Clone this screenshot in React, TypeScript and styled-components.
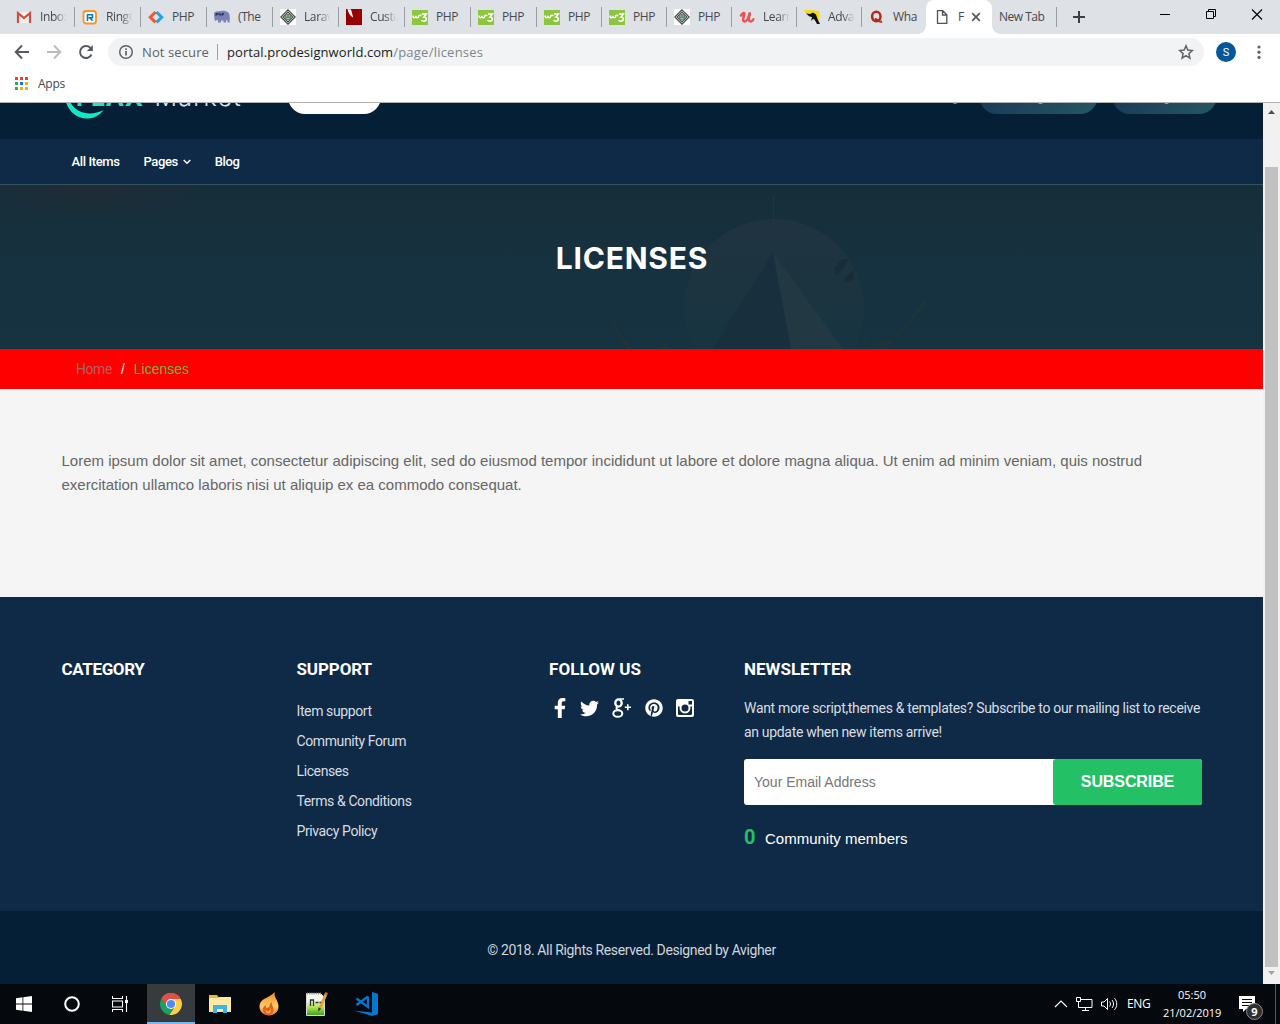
import React from 'react';
import styled, { createGlobalStyle } from 'styled-components';
import { FaFacebookF, FaTwitter, FaPinterest } from 'react-icons/fa';

const ui = '"Open Sans", "Noto Sans", sans-serif';
const body = '"Liberation Sans", Arial, sans-serif';
const site = 'Roboto, sans-serif';

const GlobalStyle = createGlobalStyle`
  * { box-sizing: border-box; }
  body { margin: 0; overflow: hidden; }
  svg { display: block; flex: none; }
  h1, h2, p, ul { margin: 0; padding: 0; }
  ul { list-style: none; }
  a { color: inherit; text-decoration: none; }
`;

const Desktop = styled.div`
  display: flex;
  flex-direction: column;
  width: 1280px;
  height: 1024px;
  overflow: hidden;
  font-family: ${body};
`;

/* ---------- browser window ---------- */

const TabStrip = styled.div`
  display: flex;
  flex: none;
  height: 34px;
  padding-left: 8px;
  background: #dee1e6;
`;

const TabBox = styled.div<{ $width: number; $divider: boolean }>`
  position: relative;
  display: flex;
  align-items: center;
  gap: 8px;
  width: ${(p) => p.$width}px;
  padding-left: 8px;
  &::after {
    content: '';
    display: ${(p) => (p.$divider ? 'block' : 'none')};
    position: absolute;
    right: -1px;
    top: 7px;
    width: 1px;
    height: 20px;
    background: #9a9da1;
  }
`;

const TabLabel = styled.span<{ $fade?: boolean }>`
  width: 27px;
  overflow: hidden;
  white-space: nowrap;
  font: 12px/16px ${ui};
  letter-spacing: -0.4px;
  color: #45494d;
  mask-image: ${(p) => (p.$fade ? 'linear-gradient(90deg, #000 55%, transparent 98%)' : 'none')};
`;

const ActiveTab = styled.div`
  position: relative;
  display: flex;
  align-items: center;
  width: 66px;
  padding-left: 8px;
  background: #fff;
  border-radius: 8px 8px 0 0;
  &::before, &::after {
    content: '';
    position: absolute;
    bottom: 0;
    width: 8px;
    height: 8px;
  }
  &::before { left: -8px; background: radial-gradient(circle at 0 0, #dee1e6 7.5px, #fff 8px); }
  &::after { right: -8px; background: radial-gradient(circle at 100% 0, #dee1e6 7.5px, #fff 8px); }
`;

const ActiveLabel = styled.span`
  width: 7px;
  margin: 0 6px 0 8px;
  font: 12px/16px ${ui};
  color: #45494d;
`;

const NewTab = styled.div`
  width: 65px;
  height: 20px;
  margin-top: 7px;
  padding-left: 7px;
  border-right: 1px solid #9a9da1;
  font: 12px/20px ${ui};
  letter-spacing: -0.5px;
  color: #45494d;
  white-space: nowrap;
`;

const PlusButton = styled.div`
  margin: 11px 0 0 16px;
`;

const WindowButtons = styled.div`
  display: flex;
  gap: 34px;
  margin: 9px 17px 0 auto;
`;

const Toolbar = styled.div`
  display: flex;
  flex: none;
  align-items: center;
  height: 36px;
  padding-left: 14px;
  background: #fff;
`;

const NavButtons = styled.div`
  display: flex;
  gap: 16px;
  width: 94px;
`;

const AddressBar = styled.div`
  display: flex;
  align-items: center;
  width: 1096px;
  height: 28px;
  padding: 0 10px;
  border-radius: 14px;
  background: #f1f3f4;
  font: 13px/20px ${ui};
`;

const Insecure = styled.span`
  width: 76px;
  margin-left: 8px;
  letter-spacing: 0.11px;
  color: #5f6368;
  border-right: 1px solid #9aa0a6;
  line-height: 16px;
`;

const Url = styled.span`
  flex: 1;
  margin-left: 9px;
  letter-spacing: 0.07px;
  color: #202124;
`;

const UrlPath = styled.span`
  letter-spacing: 0.23px;
  color: #80868b;
`;

const Avatar = styled.div`
  width: 20px;
  height: 20px;
  margin: 0 21px 0 12px;
  border-radius: 50%;
  background: #01579b;
  color: #fff;
  font: 11px/21px Roboto, sans-serif;
  text-align: center;
`;

const Bookmarks = styled.div`
  display: flex;
  flex: none;
  align-items: center;
  gap: 10px;
  height: 33px;
  padding: 0 0 4px 15px;
  background: #fff;
  border-bottom: 1px solid #b3b2b2;
  font: 12px/20px ${ui};
  letter-spacing: -0.25px;
  color: #45494d;
`;

const AppsGrid = styled.div`
  display: grid;
  grid-template-columns: repeat(3, 3px);
  gap: 2px;
  margin-bottom: 2px;
`;

const Dot = styled.i<{ $color: string }>`
  height: 3px;
  background: ${(p) => p.$color};
`;

const Viewport = styled.div`
  display: flex;
  flex: 1;
  min-height: 0;
`;

const Page = styled.main`
  display: flex;
  flex-direction: column;
  width: 1263px;
`;

const Scrollbar = styled.div`
  display: flex;
  flex-direction: column;
  align-items: center;
  width: 17px;
  padding: 7px 0 6px;
  background: #f1f1f1;
`;

const Thumb = styled.div`
  width: 13px;
  height: 800px;
  margin: 53px 0 4px;
  background: #c1c1c1;
`;

/* ---------- site ---------- */

const Header = styled.header`
  flex: none;
  height: 36px;
  overflow: hidden;
  background: #051f37;
`;

const HeaderInner = styled.div`
  display: flex;
  height: 40px;
  margin-top: -29px;
  padding-left: 64px;
`;

const Logo = styled.div`
  position: relative;
  width: 224px;
  white-space: nowrap;
`;

const LogoText = styled.div`
  display: flex;
  gap: 11px;
  padding: 8px 0 0 12px;
  font: 700 25px/30px Inter, sans-serif;
  letter-spacing: 0.4px;
  color: #13e8c8;
`;

const LogoLight = styled.span`
  font-weight: 300;
  letter-spacing: 1.2px;
  color: #dfe6ee;
`;

const LogoSwoosh = styled.svg`
  position: absolute;
  left: 0;
  top: 16px;
`;

const SearchPill = styled.div`
  width: 93px;
  border-radius: 17px;
  background: #fff;
`;

const CartDot = styled.div`
  align-self: flex-end;
  width: 6px;
  height: 3px;
  margin: 0 21px 10px auto;
  border-radius: 0 0 3px 3px;
  background: #26bf66;
`;

const AccountButton = styled.div<{ $width: number }>`
  display: flex;
  align-items: flex-end;
  justify-content: center;
  width: ${(p) => p.$width}px;
  margin-right: 14px;
  border-radius: 18px;
  background: linear-gradient(135deg, #1b3a5b 20%, #22555f 90%);
  &:last-child { margin-right: 46px; }
`;

const Descender = styled.i`
  width: 5px;
  height: 2px;
  margin: 0 0 10px 4px;
  border-radius: 0 0 2px 2px;
  background: #8fa5b2;
`;

const Nav = styled.nav`
  display: flex;
  flex: none;
  align-items: center;
  gap: 24px;
  height: 45px;
  padding-left: 71.5px;
  background: #0f2a47;
  font: 500 13px/20px ${site};
  letter-spacing: -0.39px;
  color: #fff;
`;

const NavItem = styled.a`
  display: flex;
  align-items: center;
  gap: 5px;
`;

const Hero = styled.section`
  position: relative;
  display: flex;
  flex: none;
  justify-content: center;
  height: 165px;
  padding: 55px 0 0 1px;
  border-top: 1px solid #35535f;
  background: #162f3d;
`;

const HeroArt = styled.svg`
  position: absolute;
  inset: 0;
`;

const Title = styled.h1`
  position: relative;
  font: 700 30px/36px Inter, sans-serif;
  letter-spacing: 0.8px;
  color: #fff;
`;

const Breadcrumb = styled.div`
  display: flex;
  flex: none;
  height: 40px;
  padding-left: 76px;
  background: #f00;
  font: 14px/40px ${body};
`;

const HomeLink = styled.a`
  font-family: ${site};
  letter-spacing: -0.45px;
  color: #b0605f;
`;

const Slash = styled.span`
  margin: 0 9px;
  color: #eee;
`;

const Current = styled.span`
  color: #5dbb46;
`;

const Content = styled.section`
  flex: none;
  height: 208px;
  padding: 60px 61px 0 61.5px;
  background: #f5f5f5;
  font: 15px/24px ${body};
  color: #666;
`;

const Footer = styled.footer`
  display: grid;
  flex: none;
  grid-template-columns: 235px 252.5px 195px 458px;
  height: 314px;
  padding: 60px 0 0 61.5px;
  background: #0f2a47;
  color: #d9dde2;
  font: 14px/24px ${site};
`;

const Heading = styled.h2<{ $tracking?: number }>`
  margin-bottom: 15px;
  font: 700 17px/24px ${site};
  letter-spacing: ${(p) => p.$tracking ?? 0}px;
  color: #fff;
`;

const LinkItem = styled.li`
  line-height: 30px;
  letter-spacing: -0.39px;
`;

const Socials = styled.div`
  display: flex;
  align-items: center;
  height: 24px;
  padding-left: 1px;
  gap: 13.5px;
  color: #fff;
  & > :first-child { margin-right: -4px; }
`;

const Pitch = styled.p`
  margin-bottom: 15px;
  letter-spacing: -0.32px;
`;

const Form = styled.div`
  display: flex;
  height: 46px;
  border-radius: 3px;
  background: #fff;
`;

const Email = styled.input`
  flex: 1;
  min-width: 0;
  padding: 0 10px;
  border: 0;
  background: transparent;
  font: 14px ${body};
  &::placeholder { color: #777; }
`;

const Subscribe = styled.button`
  width: 149px;
  padding: 0;
  border: 0;
  border-radius: 3px;
  background: #23c065;
  color: #fff;
  font: 700 16px ${body};
  letter-spacing: -0.1px;
`;

const Members = styled.div`
  display: flex;
  align-items: center;
  gap: 10px;
  margin-top: 20px;
  color: #fff;
  font: 15px/28px ${body};
`;

const Count = styled.b`
  margin-bottom: 4px;
  font: 700 20px/24px ${site};
  letter-spacing: -0.5px;
  color: #23c065;
`;

const Copyright = styled.div`
  flex: none;
  height: 73px;
  padding-top: 3px;
  background: #051f37;
  color: #d0d5da;
  font: 14px/73px ${site};
  letter-spacing: -0.37px;
  text-align: center;
`;

/* ---------- taskbar ---------- */

const Taskbar = styled.div`
  display: flex;
  flex: none;
  height: 40px;
  background: #05080c;
  color: #fff;
`;

const TaskButton = styled.div<{ $active?: boolean; $gap?: number }>`
  display: flex;
  align-items: center;
  justify-content: center;
  width: 48px;
  margin-left: ${(p) => p.$gap ?? 0}px;
  background: ${(p) => (p.$active ? '#383b3e' : 'transparent')};
  border-bottom: ${(p) => (p.$active ? '2px solid #76b9ed' : 'none')};
  padding-top: ${(p) => (p.$active ? '2px' : '0')};
`;

const Tray = styled.div`
  display: flex;
  align-items: center;
  margin-left: auto;
  font: 11px/18px ${ui};
`;

const TrayIcons = styled.div`
  display: flex;
  align-items: center;
  gap: 8px;
  margin-right: 9px;
`;

const Language = styled.span`
  width: 36px;
  font-size: 12px;
  letter-spacing: -0.4px;
`;

const Clock = styled.div`
  width: 58px;
  margin-right: 18px;
  text-align: center;
`;

const Notices = styled.div`
  position: relative;
  width: 37px;
  height: 40px;
  padding-top: 12px;
  border-right: 1px solid #55585b;
`;

const NoticeCount = styled.span`
  position: absolute;
  left: 7px;
  top: 19px;
  width: 17px;
  height: 17px;
  border: 1px solid #8b8b8b;
  border-radius: 50%;
  background: #2e2f31;
  font: 700 11px/15px ${ui};
  text-align: center;
`;

const TaskEnd = styled.div`
  width: 4px;
`;

/* ---------- favicons ---------- */

const W3 = () => (
  <svg width="16" height="16" viewBox="0 0 16 16">
    <path fill="#8cc63f" d="M0 1h16v15H0z" />
    <path d="M1 6.500c0 3 2.800 3 2.800.3 0 2.700 3 2.700 3-.3.500-.5 1.200-.3 2.700 0" fill="none" stroke="#fff" strokeWidth="1.500" />
    <path d="M10 5h4.300L12 8c3.300-.2 3 4.300-.2 4.300-1 0-1.800-.5-2.200-1.300" fill="none" stroke="#fff" strokeWidth="1.600" />
  </svg>
);

const Diamond = () => (
  <svg width="16" height="16" viewBox="0 0 16 16">
    <path fill="#fff" d="M0 0h16v16H0z" />
    <path d="M8 .8 15.200 8 8 15.200.8 8zM8 3.200 12.800 8 8 12.800 3.200 8z" fill="none" stroke="#4b4f4d" strokeWidth="1.200" />
    <circle cx="8" cy="8" r="3" fill="#4c8068" />
    <path d="M6 7h1.500M8.500 7H10M6.500 9.300h3" stroke="#dcebe3" strokeWidth=".8" />
  </svg>
);

const Gmail = () => (
  <svg width="16" height="16" viewBox="0 0 16 16">
    <path fill="#f3f0f0" d="M2 3h12v11H2z" />
    <path d="M2 14V4l6 5 6-5v10" fill="none" stroke="#d54b3d" strokeWidth="2.200" />
  </svg>
);

const Ring = () => (
  <svg width="16" height="16" viewBox="0 0 16 16">
    <rect x="1.500" y="2" width="12.500" height="12.500" rx="2.500" fill="#fff" stroke="#f7941e" strokeWidth="1.800" />
    <path d="M5.500 12V5.800h5v3h-4M8 9l2.500 2.800" fill="none" stroke="#0a78be" strokeWidth="1.600" />
  </svg>
);

const Chevrons = () => (
  <svg width="16" height="16" viewBox="0 0 16 16" fill="none" strokeWidth="3">
    <path d="M7.500 3 2.300 8.200l5.200 5.200" stroke="#f05a28" />
    <path d="m8.500 3 5.200 5.200-5.200 5.200" stroke="#27a1dd" />
  </svg>
);

const Elephant = () => (
  <svg width="16" height="16" viewBox="0 0 16 16">
    <path fill="#7c81b4" d="M0 5c0-2 2-3 5-2.500C8 1 15 1.500 15.500 6c.5 3 .2 5 0 7.500h-2V11l-1.500.5v2H9.500v-2H7v2H4V11H2.500c0 1.500-2 1-2-.5z" />
    <path d="M2 7V4.500h1.500v1H2M5 3.500v3M5 5h1.500v1.500M8 7V4.500h1.500v1H8" fill="none" stroke="#2c3060" strokeWidth="1" />
  </svg>
);

const RedMark = () => (
  <svg width="16" height="16" viewBox="0 0 16 16">
    <path fill="#980000" d="M0 0h16v16H0z" />
    <path fill="#fff" d="m1.500 0 3.500.5 2.300 8.300C4.500 7 2 4 1.500 0z" />
  </svg>
);

const Udemy = () => (
  <svg width="16" height="16" viewBox="0 0 16 16" fill="none" stroke="#ec5252" strokeLinecap="round">
    <path d="M2 6.500C4 3.500 6 3 5.300 5.500 4.500 8 3 12.500 5.500 12.500c2.500 0 4-3.500 5-8" strokeWidth="2.500" />
    <path d="M11 4.500C10 8 9 12.500 11.500 12.500c1.500 0 2.500-1 3-2.300" strokeWidth="2.300" />
  </svg>
);

const Figure = () => (
  <svg width="16" height="16" viewBox="0 0 16 16">
    <path fill="#f5dc13" d="M0 1h6l9.500 1v9H11L2 4z" />
    <path fill="#121212" d="M2 4.500 6 5 9 3.500l3 2 1.500 4.500L16 15h-3l-2.500-4.500L9 10l-2 2 1-4-2.500-.5z" />
  </svg>
);

const Quora = () => (
  <svg width="16" height="16" viewBox="0 0 16 16">
    <ellipse cx="7.300" cy="7.500" rx="4.200" ry="4.700" fill="none" stroke="#b02c15" strokeWidth="2.500" />
    <path d="M6 10c3-.8 3 4.300 7 2.500" fill="none" stroke="#b02c15" strokeWidth="2" />
  </svg>
);

const tabs: { icon: React.ReactNode; label: string; width: number; fade?: boolean }[] = [
  { icon: <Gmail />, label: 'Inbox', width: 66, fade: true },
  { icon: <Ring />, label: 'RingC', width: 66, fade: true },
  { icon: <Chevrons />, label: 'PHP', width: 66 },
  { icon: <Elephant />, label: '(The', width: 66 },
  { icon: <Diamond />, label: 'Larav', width: 66, fade: true },
  { icon: <RedMark />, label: 'Custo', width: 66, fade: true },
  { icon: <W3 />, label: 'PHP', width: 66 },
  { icon: <W3 />, label: 'PHP', width: 66 },
  { icon: <W3 />, label: 'PHP', width: 65 },
  { icon: <W3 />, label: 'PHP', width: 65 },
  { icon: <Diamond />, label: 'PHP', width: 65 },
  { icon: <Udemy />, label: 'Learn', width: 65, fade: true },
  { icon: <Figure />, label: 'Adva', width: 65, fade: true },
  { icon: <Quora />, label: 'Wha', width: 65 },
];

const appColors = ['#ea4335', '#ea4335', '#ea4335', '#34a853', '#1a73e8', '#f4b400', '#34a853', '#f4b400', '#f4b400'];

const links = ['Item support', 'Community Forum', 'Licenses', 'Terms & Conditions', 'Privacy Policy'];

function Browser() {
  return (
    <>
      <TabStrip>
        {tabs.map((t, i) => (
          <TabBox key={i} $width={t.width} $divider={i < tabs.length - 1}>
            {t.icon}
            <TabLabel $fade={t.fade}>{t.label}</TabLabel>
          </TabBox>
        ))}
        <ActiveTab>
          <svg width="16" height="16" viewBox="0 0 16 16" fill="none" stroke="#4f5256" strokeWidth="1.300">
            <path d="M3.500 1.700h5.300l4 4v8.600H3.500zM8.500 2v4h4" />
          </svg>
          <ActiveLabel>F</ActiveLabel>
          <svg width="10" height="10" viewBox="0 0 10 10" stroke="#55595d" strokeWidth="1.700">
            <path d="m1.200 1.200 7.600 7.600m0-7.600L1.200 8.800" />
          </svg>
        </ActiveTab>
        <NewTab>New Tab</NewTab>
        <PlusButton>
          <svg width="12" height="12" viewBox="0 0 12 12" stroke="#3c4043" strokeWidth="2">
            <path d="M6 0v12M0 6h12" />
          </svg>
        </PlusButton>
        <WindowButtons>
          <svg width="12" height="12" viewBox="0 0 12 12" stroke="#000"><path d="M1 5.500h10" /></svg>
          <svg width="12" height="12" viewBox="0 0 12 12" fill="none" stroke="#000"><path d="M1.500 2.500h7v7h-7zM3.500 2.500v-2h7v7h-2" /></svg>
          <svg width="12" height="12" viewBox="0 0 12 12" stroke="#000" strokeWidth="1.100"><path d="m1 .5 10 10m0-10-10 10" /></svg>
        </WindowButtons>
      </TabStrip>
      <Toolbar>
        <NavButtons>
          <svg width="16" height="16" viewBox="0 0 16 16" fill="none" stroke="#54585c" strokeWidth="1.900"><path d="M15 8H2M8 1.500 1.700 8 8 14.500" /></svg>
          <svg width="16" height="16" viewBox="0 0 16 16" fill="none" stroke="#b9bbbd" strokeWidth="1.900"><path d="M1 8h13M8 1.500 14.300 8 8 14.500" /></svg>
          <svg width="16" height="16" viewBox="0 0 16 16" fill="none" stroke="#54585c" strokeWidth="1.900"><path d="M13.500 10.500A6 6 0 1 1 12.300 3.800L14 5.500" /><path d="M14.800 1v6H9z" fill="#54585c" stroke="none" /></svg>
        </NavButtons>
        <AddressBar>
          <svg width="16" height="16" viewBox="0 0 16 16" fill="none" stroke="#5f6368" strokeWidth="1.500"><circle cx="8" cy="8" r="6.300" /><path d="M8 7v4.500M8 4.300v1.500" strokeWidth="1.700" /></svg>
          <Insecure>Not secure</Insecure>
          <Url>portal.prodesignworld.com<UrlPath>/page/licenses</UrlPath></Url>
          <svg width="16" height="16" viewBox="0 0 16 16" fill="none" stroke="#5f6368" strokeWidth="1.500"><path d="m8 1.800 1.800 4.300 4.600.4-3.500 3.100 1 4.500L8 11.700l-3.900 2.400 1-4.500-3.500-3.100 4.600-.4z" /></svg>
        </AddressBar>
        <Avatar>S</Avatar>
        <svg width="4" height="16" viewBox="0 0 4 16" fill="#5f6368"><circle cx="2" cy="3" r="1.600" /><circle cx="2" cy="8.200" r="1.600" /><circle cx="2" cy="13.400" r="1.600" /></svg>
      </Toolbar>
      <Bookmarks>
        <AppsGrid>{appColors.map((c, i) => <Dot key={i} $color={c} />)}</AppsGrid>
        Apps
      </Bookmarks>
    </>
  );
}

function SiteHeader() {
  return (
    <>
      <Header>
        <HeaderInner>
          <Logo>
            <LogoText>FLAX<LogoLight>Market</LogoLight></LogoText>
            <LogoSwoosh width="42" height="32" viewBox="0 0 42 32">
              <path d="M1 0C-1 14 8 28.500 23 28.500 30 28.500 36 25 39.500 20 26 27 10 23 5.500 10z" fill="#13e8c8" />
            </LogoSwoosh>
          </Logo>
          <SearchPill />
          <CartDot />
          <AccountButton $width={119}><Descender /></AccountButton>
          <AccountButton $width={105}><Descender /></AccountButton>
        </HeaderInner>
      </Header>
      <Nav>
        <NavItem>All Items</NavItem>
        <NavItem>
          Pages
          <svg width="8" height="6" viewBox="0 0 8 6" fill="none" stroke="#fff" strokeWidth="1.500"><path d="m.7 1 3.300 3.300L7.300 1" /></svg>
        </NavItem>
        <NavItem>Blog</NavItem>
      </Nav>
      <Hero>
        <HeroArt width="1263" height="164" viewBox="0 0 1263 164">
          <defs>
            <linearGradient id="sky" x1="0" y1="0" x2="0" y2="1"><stop offset="0" stopColor="#162e39" /><stop offset=".5" stopColor="#163140" /><stop offset="1" stopColor="#163341" /></linearGradient>
            <radialGradient id="dusk"><stop offset="0" stopColor="#202c36" /><stop offset="1" stopColor="#202c36" stopOpacity="0" /></radialGradient>
            <linearGradient id="moon" x1="0" y1="0" x2="0" y2="1"><stop offset="0" stopColor="#203440" /><stop offset=".6" stopColor="#193441" /><stop offset="1" stopColor="#163341" /></linearGradient>
          </defs>
          <path fill="url(#sky)" d="M0 0h1263v164H0z" />
          <ellipse cx="90" cy="0" rx="120" ry="34" fill="url(#dusk)" />
          <circle cx="774" cy="124" r="90" fill="url(#moon)" />
          <path fill="#182f3e" d="m773 68-38 60-22 36h78z" />
          <path fill="#223943" d="m773 68 18 96h52z" />
          <path stroke="#1b3743" d="M773.500 10v58" />
          <path fill="#172d38" d="m834 84 8-10 6 0-4 9-8 7zm10 10 9-9 1 9-8 4z" />
          <path fill="#203438" d="m927 112-2 9-37 41-18-2 13-4 10-1zm-57 37-9 11 5 1zM610 129l8 16 10 13 6 6h-8l-9-16zm55 28-5 7h10z" />
        </HeroArt>
        <Title>LICENSES</Title>
      </Hero>
      <Breadcrumb>
        <HomeLink>Home</HomeLink>
        <Slash>/</Slash>
        <Current>Licenses</Current>
      </Breadcrumb>
    </>
  );
}

function SiteFooter() {
  return (
    <>
      <Footer>
        <Heading $tracking={-0.37}>CATEGORY</Heading>
        <div>
          <Heading $tracking={-0.1}>SUPPORT</Heading>
          <ul>{links.map((l) => <LinkItem key={l}><a>{l}</a></LinkItem>)}</ul>
        </div>
        <div>
          <Heading $tracking={0.07}>FOLLOW US</Heading>
          <Socials>
            <FaFacebookF size={20} />
            <FaTwitter size={19} />
            <svg width="19" height="20" viewBox="0 0 19 20" fill="none" stroke="#fff">
              <ellipse cx="6.500" cy="5" rx="3.200" ry="3.700" strokeWidth="2.300" />
              <path d="M7.500 1H12M5.500 8.500C3 10.500 5 11.500 8 12.500" strokeWidth="1.700" />
              <ellipse cx="5.800" cy="15.500" rx="4.500" ry="3.300" strokeWidth="2" />
              <path d="M15.800 6.200v6M12.800 9.200h6.200" strokeWidth="1.600" />
            </svg>
            <FaPinterest size={18} />
            <svg width="18" height="18" viewBox="0 0 18 18">
              <path fillRule="evenodd" fill="#fff" d="M2 0h14a2 2 0 0 1 2 2v14a2 2 0 0 1-2 2H2a2 2 0 0 1-2-2V2a2 2 0 0 1 2-2zm10.500 2v3.500H16V2zM2 7.500V15a1 1 0 0 0 1 1h12a1 1 0 0 0 1-1V7.500h-1.700a5.500 5.500 0 1 1-10.600 0z" />
              <circle cx="9" cy="9" r="3.500" fill="#0f2a47" />
            </svg>
          </Socials>
        </div>
        <div>
          <Heading>NEWSLETTER</Heading>
          <Pitch>
            Want more script,themes &amp; templates? Subscribe to our mailing list to receive
            <br />
            an update when new items arrive!
          </Pitch>
          <Form>
            <Email placeholder="Your Email Address" />
            <Subscribe>SUBSCRIBE</Subscribe>
          </Form>
          <Members><Count>0</Count>Community members</Members>
        </div>
      </Footer>
      <Copyright>© 2018. All Rights Reserved. Designed by Avigher</Copyright>
    </>
  );
}

function WindowsTaskbar() {
  return (
    <Taskbar>
      <TaskButton>
        <svg width="16" height="16" viewBox="0 0 16 16" fill="#fff"><path d="M0 2.200 6.500 1.300v6.200H0zM7.300 1.200 16 0v7.500H7.300zM0 8.400h6.500v6.300L0 13.800zM7.300 8.400H16V16l-8.700-1.200z" /></svg>
      </TaskButton>
      <TaskButton>
        <svg width="16" height="16" viewBox="0 0 16 16" fill="none" stroke="#fff" strokeWidth="2"><circle cx="8" cy="8" r="6.800" /></svg>
      </TaskButton>
      <TaskButton>
        <svg width="16" height="16" viewBox="0 0 16 16" fill="none" stroke="#fff" strokeWidth="1.100"><path d="M.5 0v2.500h10V0M.5 16v-2.500h10V16M.5 5h10v6H.5zM14.500 0v16" /><path d="M13 4h3v3h-3z" fill="#fff" stroke="none" /></svg>
      </TaskButton>
      <TaskButton $active $gap={3}>
        <svg width="22" height="22" viewBox="0 0 22 22">
          <path fill="#de5246" d="M1.500 5.500a11 11 0 0 1 19 0L11 11z" />
          <path fill="#de5246" d="M1.500 5.500 6 13.500l5-7.500h9.700A11 11 0 0 0 1.500 5.500z" />
          <path fill="#1aa260" d="M1.500 5.500A11 11 0 0 0 9.500 21.900L14.500 14 11 16 6.200 13.500z" />
          <path fill="#ffce44" d="M11 6h9.700A11 11 0 0 1 9.500 21.900l5-7.900z" />
          <circle cx="11" cy="11" r="5.100" fill="#fff" /><circle cx="11" cy="11" r="4.100" fill="#4c8bf5" />
        </svg>
      </TaskButton>
      <TaskButton $gap={1}>
        <svg width="22" height="20" viewBox="0 0 22 20">
          <path fill="#e7b83f" d="M0 1h8l1.500 2H22v15H0z" />
          <path fill="#ffe9a2" d="M0 4h9l1.500-1H22v15H0z" />
          <path fill="#3fb3e8" d="M4 11h14v8h-4v-4H8v4H4z" />
        </svg>
      </TaskButton>
      <TaskButton $gap={1}>
        <svg width="20" height="24" viewBox="0 0 20 24">
          <defs><linearGradient id="fl" x1="0" y1="0" x2="0" y2="1"><stop offset="0" stopColor="#f38b21" /><stop offset=".6" stopColor="#ffcb6b" /><stop offset="1" stopColor="#ee7b1c" /></linearGradient></defs>
          <path fill="url(#fl)" d="M16 0c-2 5 3.500 8 3.500 14.500C19.500 20 15 23.500 10 23.500S.5 20 .5 14.500C.5 6 9 7 16 0z" />
          <path fill="#e4601a" d="M13 10c-1 2.500 1.500 4 1.500 7.500 0 3-2.500 5.500-5.500 5.500s-5-2.500-5-5.500S6 14 7 13c0 2-.5 2.500 1 3C12 15 9.500 12 13 10z" />
          <path fill="#f7a64a" d="M11 16c1 4.500-4.500 4-4 1-1 2-.5 4 2 4.500 3.500 0 3.500-3.500 2-5.500z" />
        </svg>
      </TaskButton>
      <TaskButton $gap={0}>
        <svg width="24" height="24" viewBox="0 0 24 24">
          <defs><linearGradient id="np" x1="0" y1="0" x2="0" y2="1"><stop offset=".3" stopColor="#f5f8ee" /><stop offset=".65" stopColor="#a5e24b" /><stop offset="1" stopColor="#3d9b1c" /></linearGradient></defs>
          <path fill="url(#np)" stroke="#d8d8d8" d="M1.500 1.500h14l4 4v18h-18z" />
          <path stroke="#8a8a8a" strokeDasharray="1 1.200" strokeWidth="2" d="M2 1.500h14" />
          <path d="M5.500 14V8h3v6M10.500 10.500h3M14.500 10.500h3" fill="none" stroke="#303030" strokeWidth="1.300" />
          <path stroke="#e3a431" strokeWidth="3" d="m21 2-6 14" /><path stroke="#d05050" strokeWidth="3" d="m21.700.5-.8 2" /><path fill="#333" d="m13.500 15.500 2.800 1.200-3.300 2.800z" />
        </svg>
      </TaskButton>
      <TaskButton $gap={1}>
        <svg width="24" height="24" viewBox="0 0 24 24">
          <path fill="#0079cc" d="M18 0l6 1.800v20.400L18 24 0 18.500l18 2z" />
          <path d="M14 4.500v10.500L2.500 6.500M14 4.500 2.500 13" fill="none" stroke="#0079cc" strokeWidth="2.300" />
        </svg>
      </TaskButton>
      <Tray>
        <TrayIcons>
          <svg width="14" height="8" viewBox="0 0 14 8" fill="none" stroke="#fff" strokeWidth="1.200"><path d="m1 7 6-6 6 6" /></svg>
          <svg width="17" height="14" viewBox="0 0 17 14" fill="none" stroke="#fff"><path d="M4 2.500h12v8H2.500v-4M9.500 10.500v3M6 13.500h7M.5.500h4v4h-4zM2.500 4v3" /></svg>
          <svg width="17" height="14" viewBox="0 0 17 14" fill="none" stroke="#fff"><path d="M.5 5h2.500L6.500 1.500v11L3 9H.500zM8.500 4.500c1.300 1.500 1.300 3.500 0 5M11 3c2 2.500 2 5.500 0 8M13.500 1.200c3 3.500 3 8 0 11.600" /></svg>
        </TrayIcons>
        <Language>ENG</Language>
        <Clock>05:50<br />21/02/2019</Clock>
        <Notices>
          <svg width="17" height="17" viewBox="0 0 17 17"><path fill="#fff" d="M0 0h16v13H7l-3 3v-3H0z" /><path stroke="#05080c" d="M3 3.500h10M3 6.500h10M3 9.500h7" /></svg>
          <NoticeCount>9</NoticeCount>
        </Notices>
        <TaskEnd />
      </Tray>
    </Taskbar>
  );
}

export default function App() {
  return (
    <Desktop>
      <GlobalStyle />
      <Browser />
      <Viewport>
        <Page>
          <SiteHeader />
          <Content>
            Lorem ipsum dolor sit amet, consectetur adipiscing elit, sed do eiusmod tempor incididunt ut labore et dolore magna aliqua. Ut enim ad minim veniam, quis nostrud exercitation ullamco laboris nisi ut aliquip ex ea commodo consequat.
          </Content>
          <SiteFooter />
        </Page>
        <Scrollbar>
          <svg width="7" height="4" viewBox="0 0 7 4" fill="#505050"><path d="M0 4 3.500 0 7 4z" /></svg>
          <Thumb />
          <svg width="7" height="4" viewBox="0 0 7 4" fill="#a3a3a3"><path d="m0 0 3.500 4L7 0z" /></svg>
        </Scrollbar>
      </Viewport>
      <WindowsTaskbar />
    </Desktop>
  );
}
